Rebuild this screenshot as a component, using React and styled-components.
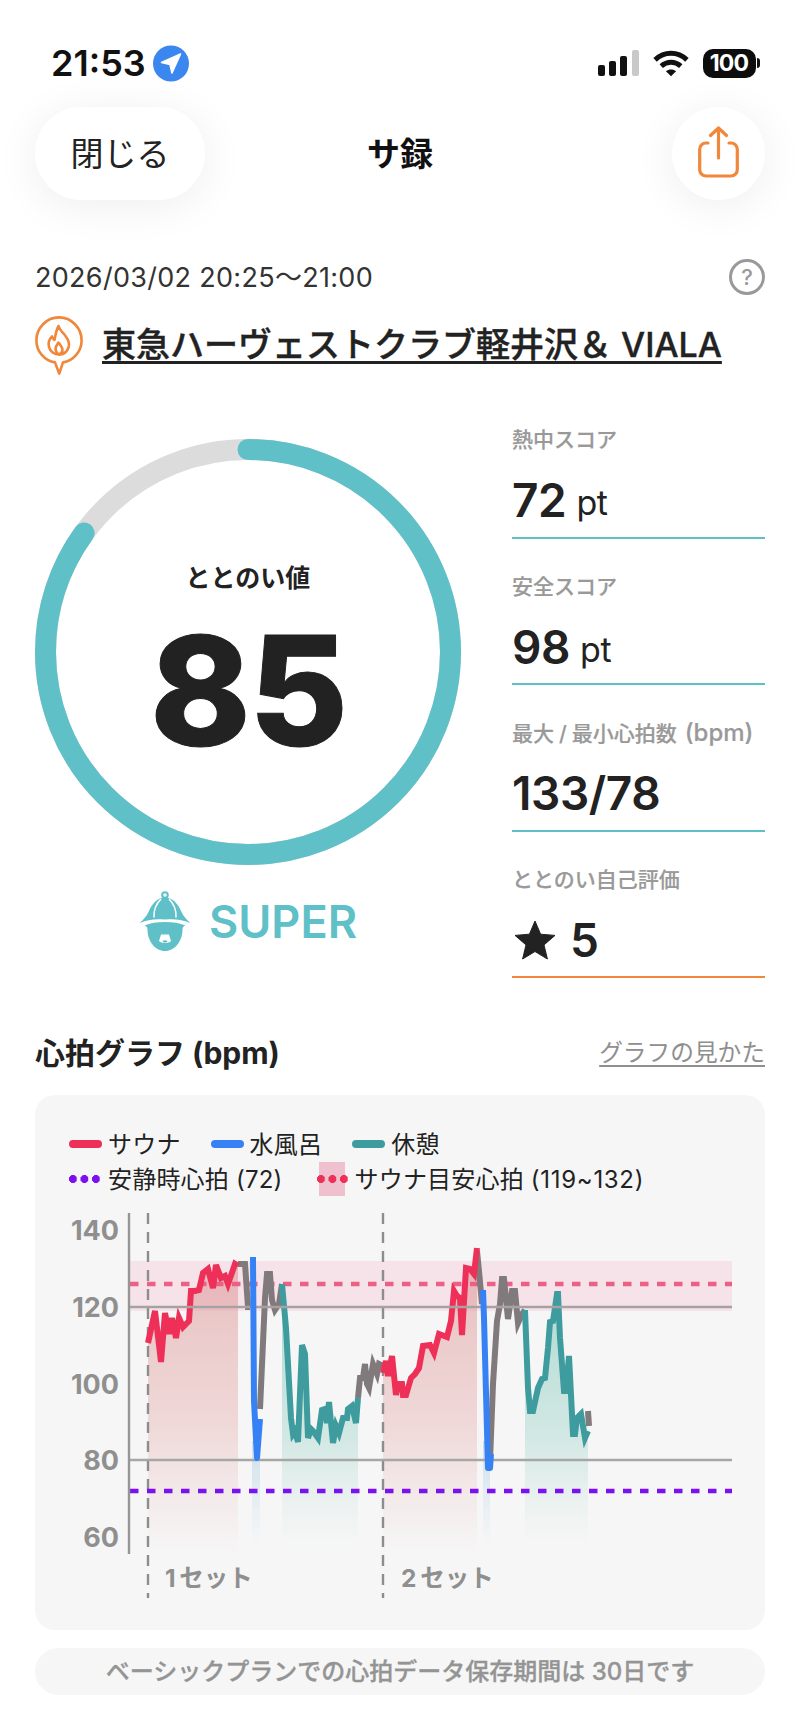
import styled, { createGlobalStyle } from "styled-components";

const TEAL = "#5fc0c7";
const ORANGE = "#f0873a";

const GlobalStyle = createGlobalStyle`
  html, body {
    margin: 0;
    padding: 0;
    background: #ffffff;
  }
  * {
    box-sizing: border-box;
  }
  body {
    font-family: "Inter", "Noto Sans CJK JP", sans-serif;
    color: #222222;
  }
`;

// page coordinates, read off the reference
const red1 = "148,1342 155,1310 161,1361 165,1312 169,1333 172,1317 176,1337 179,1317 183,1326 189,1320 191,1290 195,1290 199,1289 203,1272 208,1268 213,1287 216,1264 221,1277 225,1275 228,1283 235,1263 238,1265";
const gray1 = "238,1263 245,1263 248,1306 250,1306";
const blue1 = "253,1256 254,1400 257,1457 260,1418";
const gray2 = "260,1408 265,1297 267,1273 270,1273 272,1299 275,1309 279,1303 282,1283";
const teal1 = "282,1283 286,1327 291,1417 293,1433 295,1430 298,1441 302,1344 305,1353 308,1437 311,1428 313,1430 318,1437 322,1409 325,1408 327,1422 329,1401 333,1442 336,1425 339,1432 343,1417 347,1417 348,1408 352,1405 356,1422 358,1397";
const gray3 = "358,1397 360,1377 363,1377 365,1363 367,1383 369,1387 373,1363 377,1373 379,1363 383,1365";
const red2 = "383,1372 386,1360 388,1375 392,1355 396,1394 398,1383 402,1383 403,1394 406,1394 411,1377 415,1373 419,1367 423,1345 430,1344 434,1352 439,1333 447,1336 451,1320 454,1290 457,1295 460,1297 462,1334 466,1267 470,1268 474,1273 477,1247";
const gray4 = "477,1250 479,1270 482,1303";
const blue2 = "483,1289 484,1317 488,1467 490,1467 491,1453";
const gray5 = "490,1460 493,1383 497,1320 500,1303 502,1278 504,1278 508,1318 512,1290 515,1290 518,1322 522,1313 525,1309";
const teal2 = "525,1309 528,1387 530,1410 533,1410 538,1387 542,1378 545,1377 548,1347 550,1321 553,1320 557,1293 558,1293 560,1337 564,1390 566,1390 569,1355 573,1433 575,1433 577,1417 581,1413 585,1437 588,1430";
const gray6 = "588,1410 589,1425";

function areaUnder(points, bottom) {
  const list = points.split(" ");
  const first = list[0].split(",")[0];
  const last = list[list.length - 1].split(",")[0];
  return `${first},${bottom} ${points} ${last},${bottom}`;
}

function StatusIcons() {
  return (
    <StatusRight>
      <svg width="41" height="26" viewBox="0 0 41 26">
        <rect x="0" y="15" width="7" height="11" rx="2" fill="#111" />
        <rect x="11" y="11" width="7" height="15" rx="2" fill="#111" />
        <rect x="22" y="6" width="7" height="20" rx="2" fill="#111" />
        <rect x="34" y="0" width="7" height="26" rx="2" fill="#c9c9c9" />
      </svg>
      <svg width="36" height="27" viewBox="0 0 35 26" fill="none" stroke="#111" strokeWidth="4.8">
        <path d="M2 9.5C11 1 24 1 33 9.5" />
        <path d="M8 15.5C13.5 10.5 21.5 10.5 27 15.5" />
        <path d="M17.5 25.5L12.6 20.6C15.3 18.2 19.7 18.2 22.4 20.6Z" fill="#111" stroke="none" />
      </svg>
      <Battery>
        <BatteryBody>100</BatteryBody>
        <BatteryNub />
      </Battery>
    </StatusRight>
  );
}

function VenueIcon() {
  return (
    <svg width="48" height="59" viewBox="0 0 48 59" fill="none" stroke={ORANGE} strokeWidth="2.6" strokeLinejoin="round" strokeLinecap="round">
      <path d="M20 46.4C9.5 44.6 1.4 35.4 1.4 24.4C1.4 12 11.5 1.4 24 1.4C36.5 1.4 46.6 12 46.6 24.4C46.6 35.4 38.5 44.6 28 46.4L24.2 57.6Z" />
      <path d="M23.5 10C25 15 28 16.5 30.5 20C33.5 24 35 27.5 33.5 31.5C32 36 28 38.5 24 38.5C19.5 38.5 15 35.5 14 31C13 27 14.5 23 17 20.5C17.5 22.5 18.5 23.5 19.5 24C20.5 19 21 14.5 23.5 10Z" />
      <path d="M24 38.5C21 36.5 20 33.5 21 30.5L23.5 26.5C25.5 29 27.5 31.5 27.5 34C27.5 36 26 37.5 24 38.5Z" />
    </svg>
  );
}

function Mascot() {
  return (
    <svg width="52" height="60" viewBox="0 0 52 60">
      <circle cx="26" cy="4" r="2.8" fill="none" stroke={TEAL} strokeWidth="2" />
      <path d="M26 6.5C34 6.5 39 13 42.5 21C44.5 25.5 48 29 51.5 32C44 28.5 35 27.5 26 28.5C17 27.5 8 28.5 0.5 32C4 29 7.5 25.5 9.5 21C13 13 18 6.5 26 6.5Z" fill={TEAL} />
      <path d="M22 8C17 13 14.5 20 15 26.5M30 8C35 13 37.5 20 37 26.5" fill="none" stroke="#fff" strokeWidth="1.5" />
      <path d="M8.5 38.5C8.5 36.5 7.5 35 5.5 34.5C11 32 18 31 26 31C34 31 41 32 46.5 34.5C44.5 35 43.5 36.5 43.5 38.5C43.5 50 36 60 26 60C16 60 8.5 50 8.5 38.5Z" fill={TEAL} />
      <path d="M22 43.5H30L32 50C30.5 51.5 28.5 52 26 52C23.5 52 21.5 51.5 20 50Z" fill="#fff" />
      <path d="M23.5 50C25 49 27 49 28.5 50L27.5 51.5H24.5Z" fill={TEAL} />
    </svg>
  );
}

function HeartChart() {
  return (
    <ChartSvg width="730" height="424" viewBox="35 1205 730 424">
      <defs>
        <linearGradient id="redFade" gradientUnits="userSpaceOnUse" x1="0" y1="1270" x2="0" y2="1553">
          <stop offset="0" stopColor="#d98a8a" stopOpacity="0.5" />
          <stop offset="0.55" stopColor="#e29a9a" stopOpacity="0.32" />
          <stop offset="1" stopColor="#e8a8a8" stopOpacity="0" />
        </linearGradient>
        <linearGradient id="tealFade" gradientUnits="userSpaceOnUse" x1="0" y1="1300" x2="0" y2="1545">
          <stop offset="0" stopColor="#5fb8a8" stopOpacity="0.45" />
          <stop offset="0.55" stopColor="#7cc6b8" stopOpacity="0.3" />
          <stop offset="1" stopColor="#a8d8ce" stopOpacity="0" />
        </linearGradient>
        <linearGradient id="blueFade" gradientUnits="userSpaceOnUse" x1="0" y1="1440" x2="0" y2="1545">
          <stop offset="0" stopColor="#9cc8e6" stopOpacity="0.5" />
          <stop offset="1" stopColor="#b8d8ee" stopOpacity="0" />
        </linearGradient>
      </defs>

      <rect x="130" y="1260" width="602" height="50" fill="#f6e3e9" />

      <polygon points={areaUnder(red1, 1553)} fill="url(#redFade)" />
      <polygon points={areaUnder(red2, 1553)} fill="url(#redFade)" />
      <rect x="252" y="1440" width="8" height="103" fill="url(#blueFade)" />
      <rect x="483" y="1440" width="7" height="103" fill="url(#blueFade)" />
      <polygon points={areaUnder(teal1, 1543)} fill="url(#tealFade)" />
      <polygon points={areaUnder(teal2, 1543)} fill="url(#tealFade)" />

      <line x1="148" y1="1212" x2="148" y2="1597" stroke="#8d8d8d" strokeWidth="2.4" strokeDasharray="11 8" />
      <line x1="383" y1="1212" x2="383" y2="1597" stroke="#8d8d8d" strokeWidth="2.4" strokeDasharray="11 8" />
      <line x1="130" y1="1283" x2="732" y2="1283" stroke="#ec5f86" strokeWidth="4.5" strokeDasharray="8.5 8.5" />

      <g fill="none" strokeWidth="6" strokeLinejoin="miter">
        <polyline points={gray1} stroke="#807a7c" />
        <polyline points={gray2} stroke="#807a7c" />
        <polyline points={gray3} stroke="#807a7c" />
        <polyline points={gray4} stroke="#807a7c" />
        <polyline points={gray5} stroke="#807a7c" />
        <polyline points={gray6} stroke="#807a7c" />
        <polyline points={teal1} stroke="#3e9c9f" />
        <polyline points={teal2} stroke="#3e9c9f" />
        <polyline points={red1} stroke="#ee3058" />
        <polyline points={red2} stroke="#ee3058" />
      </g>

      <line x1="130" y1="1306" x2="732" y2="1306" stroke="#a6a2a4" strokeWidth="2.4" />
      <line x1="130" y1="1459" x2="732" y2="1459" stroke="#a6a6a6" strokeWidth="2.4" />

      <g fill="none" strokeWidth="6" strokeLinejoin="round">
        <polyline points={blue1} stroke="#3682f4" />
        <polyline points={blue2} stroke="#3682f4" />
      </g>

      <line x1="130" y1="1490" x2="732" y2="1490" stroke="#7c10f0" strokeWidth="4.5" strokeDasharray="8.5 8.5" />
      <line x1="129" y1="1212" x2="129" y2="1553" stroke="#969696" strokeWidth="2.4" />

      <AxisLabel x="119" y="1239">140</AxisLabel>
      <AxisLabel x="119" y="1316">120</AxisLabel>
      <AxisLabel x="119" y="1393">100</AxisLabel>
      <AxisLabel x="119" y="1469">80</AxisLabel>
      <AxisLabel x="119" y="1546">60</AxisLabel>
      <SetLabel x="165" y="1586">1 セット</SetLabel>
      <SetLabel x="401" y="1586">2 セット</SetLabel>
    </ChartSvg>
  );
}

export default function App() {
  return (
    <Page>
      <GlobalStyle />
      <StatusBar>
        <StatusLeft>
          <Clock>21:53</Clock>
          <svg width="36" height="37" viewBox="0 0 36 37">
            <circle cx="18" cy="18.5" r="18" fill="#3b87f0" />
            <path d="M27.5 9L8.5 17.5L17 19.5L19 28Z" fill="#fff" stroke="#fff" strokeWidth="1.6" strokeLinejoin="round" />
          </svg>
        </StatusLeft>
        <StatusIcons />
      </StatusBar>

      <TopBar>
        <CloseButton>閉じる</CloseButton>
        <Title>サ録</Title>
        <ShareButton>
          <svg width="41" height="52" viewBox="0 0 41 52" fill="none" stroke={ORANGE} strokeWidth="3.2" strokeLinecap="round" strokeLinejoin="round">
            <path d="M10 17H8C4.5 17 1.7 19.8 1.7 23.3V43.7C1.7 47.2 4.5 50 8 50H33C36.5 50 39.3 47.2 39.3 43.7V23.3C39.3 19.8 36.5 17 33 17H31" />
            <path d="M20.5 32V2M12.5 9.5L20.5 2L28.5 9.5" />
          </svg>
        </ShareButton>
      </TopBar>

      <Content>
        <DateRow>
          <DateText>2026/03/02 20:25～21:00</DateText>
          <HelpMark>?</HelpMark>
        </DateRow>

        <VenueRow>
          <VenueIcon />
          <VenueName>東急ハーヴェストクラブ軽井沢＆ VIALA</VenueName>
        </VenueRow>

        <ScoreGrid>
          <ScoreLeft>
            <Ring>
              <svg width="426" height="426" viewBox="0 0 426 426" fill="none">
                <circle cx="213" cy="213" r="202.5" stroke="#dcdcdc" strokeWidth="21" />
                <circle
                  cx="213"
                  cy="213"
                  r="202.5"
                  stroke={TEAL}
                  strokeWidth="21"
                  strokeLinecap="round"
                  pathLength="100"
                  strokeDasharray="85 100"
                  transform="rotate(-90 213 213)"
                />
              </svg>
              <RingText>
                <RingLabel>ととのい値</RingLabel>
                <RingValue>85</RingValue>
              </RingText>
            </Ring>
            <RankRow>
              <Mascot />
              <RankText>SUPER</RankText>
            </RankRow>
          </ScoreLeft>

          <StatList>
            <StatItem>
              <StatLabel>熱中スコア</StatLabel>
              <StatValue>72<StatUnit>pt</StatUnit></StatValue>
            </StatItem>
            <StatItem>
              <StatLabel>安全スコア</StatLabel>
              <StatValue>98<StatUnit>pt</StatUnit></StatValue>
            </StatItem>
            <StatItem>
              <StatLabel>最大<LabelSlash>/</LabelSlash>最小心拍数<LabelLatin>(bpm)</LabelLatin></StatLabel>
              <StatValue>133/78</StatValue>
            </StatItem>
            <StatItem $accent={ORANGE}>
              <StatLabel>ととのい自己評価</StatLabel>
              <StatValue>
                <StarIcon width="42" height="40" viewBox="0 0 42 40">
                  <path d="M21 1L26.6 14.2L41 15.4L30 24.9L33.4 39L21 31.5L8.6 39L12 24.9L1 15.4L15.4 14.2Z" fill="#222" stroke="#222" strokeLinejoin="round" />
                </StarIcon>
                <StarScore>5</StarScore>
              </StatValue>
            </StatItem>
          </StatList>
        </ScoreGrid>

        <GraphHead>
          <GraphTitle>心拍グラフ (bpm)</GraphTitle>
          <GraphLink>グラフの見かた</GraphLink>
        </GraphHead>

        <GraphCard>
          <Legend>
            <LegendRow>
              <LegendItem>
                <LineSwatch $color="#ee3058" />
                <span>サウナ</span>
              </LegendItem>
              <LegendItem>
                <LineSwatch $color="#3682f4" />
                <span>水風呂</span>
              </LegendItem>
              <LegendItem>
                <LineSwatch $color="#3e9c9f" />
                <span>休憩</span>
              </LegendItem>
            </LegendRow>
            <LegendRow>
              <LegendItem>
                <DotSwatch $color="#7c10f0" />
                <span>安静時心拍 (72)</span>
              </LegendItem>
              <LegendItem>
                <BandSwatch>
                  <DotSwatch $color="#ee3058" />
                </BandSwatch>
                <span>サウナ目安心拍 <LegendRange>(119~132)</LegendRange></span>
              </LegendItem>
            </LegendRow>
          </Legend>
          <HeartChart />
        </GraphCard>

        <NoticePill>ベーシックプランでの心拍データ保存期間は 30日です</NoticePill>
      </Content>
    </Page>
  );
}

const Page = styled.div`
  width: 800px;
  height: 1732px;
  overflow: hidden;
  background: #ffffff;
`;

const StatusBar = styled.div`
  height: 107px;
  padding: 19px 40px 0 51px;
  display: flex;
  align-items: center;
  justify-content: space-between;
`;

const StatusLeft = styled.div`
  display: flex;
  align-items: center;
  gap: 7px;
`;

const Clock = styled.span`
  font-size: 36px;
  font-weight: 600;
  color: #111111;
`;

const StatusRight = styled.div`
  display: flex;
  align-items: center;
  gap: 14px;
`;

const Battery = styled.div`
  display: flex;
  align-items: center;
  gap: 1.5px;
`;

const BatteryBody = styled.div`
  width: 53px;
  height: 29px;
  border-radius: 10px;
  background: #0d0d0d;
  color: #ffffff;
  font-size: 23px;
  font-weight: 700;
  letter-spacing: -0.8px;
  line-height: 29px;
  text-align: center;
`;

const BatteryNub = styled.div`
  width: 3px;
  height: 10px;
  border-radius: 0 3px 3px 0;
  background: #111111;
`;

const TopBar = styled.div`
  height: 93px;
  padding: 0 35px 0 35px;
  display: grid;
  grid-template-columns: 1fr auto 1fr;
  align-items: center;
`;

const CloseButton = styled.div`
  width: 170px;
  height: 93px;
  padding-bottom: 4px;
  border-radius: 46px;
  background: #ffffff;
  box-shadow: 0 6px 44px rgba(0, 0, 0, 0.07);
  display: flex;
  align-items: center;
  justify-content: center;
  font-size: 33px;
  color: #222222;
`;

const Title = styled.div`
  padding-bottom: 4px;
  font-size: 33px;
  font-weight: 700;
  color: #111111;
`;

const ShareButton = styled.div`
  justify-self: end;
  width: 93px;
  height: 93px;
  border-radius: 50%;
  background: #ffffff;
  box-shadow: 0 6px 44px rgba(0, 0, 0, 0.07);
  display: flex;
  align-items: center;
  justify-content: center;
  padding-bottom: 4px;
`;

const Content = styled.div`
  padding: 60px 35px 0;
`;

const DateRow = styled.div`
  height: 36px;
  display: flex;
  align-items: center;
  justify-content: space-between;
`;

const DateText = styled.span`
  margin-bottom: 6px;
  font-size: 27px;
  letter-spacing: 0.3px;
  color: #333333;
`;

const HelpMark = styled.span`
  width: 36px;
  height: 36px;
  margin-top: -2px;
  border-radius: 50%;
  border: 3px solid #999999;
  display: flex;
  align-items: center;
  justify-content: center;
  font-size: 22px;
  font-weight: 500;
  color: #999999;
`;

const VenueRow = styled.div`
  margin-top: 20px;
  height: 59px;
  display: flex;
  align-items: center;
  gap: 19px;
`;

const VenueName = styled.span`
  margin-bottom: 6px;
  font-size: 34px;
  font-weight: 500;
  -webkit-text-stroke: 0.4px #222222;
  white-space: nowrap;
  color: #222222;
  text-decoration: underline;
  text-decoration-thickness: 3px;
  text-underline-offset: 4px;
`;

const ScoreGrid = styled.div`
  margin-top: 50px;
  display: flex;
  gap: 51px;
`;

const ScoreLeft = styled.div`
  width: 426px;
  padding-top: 14px;
`;

const Ring = styled.div`
  position: relative;
  width: 426px;
  height: 426px;
  svg {
    display: block;
  }
`;

const RingText = styled.div`
  position: absolute;
  inset: 0;
  padding-top: 124px;
  display: flex;
  flex-direction: column;
  align-items: center;
`;

const RingLabel = styled.div`
  font-size: 25px;
  font-weight: 700;
  line-height: 30px;
  color: #222222;
`;

const RingValue = styled.div`
  margin-top: 23px;
  font-size: 152px;
  font-weight: 800;
  line-height: 150px;
  letter-spacing: -2px;
  -webkit-text-stroke: 1px #222222;
  color: #222222;
`;

const RankRow = styled.div`
  margin-top: 26px;
  display: flex;
  align-items: center;
  justify-content: center;
  gap: 18px;
`;

const RankText = styled.span`
  font-size: 45px;
  font-weight: 600;
  color: ${TEAL};
`;

const StatList = styled.div`
  width: 253px;
  margin-top: 1px;
  display: flex;
  flex-direction: column;
  gap: 34px;
`;

const StatItem = styled.div`
  height: 112.5px;
  border-bottom: 2px solid ${(p) => p.$accent || TEAL};
`;

const StatLabel = styled.div`
  height: 28px;
  font-size: 21px;
  font-weight: 500;
  -webkit-text-stroke: 0.2px #999999;
  line-height: 28px;
  white-space: nowrap;
  color: #999999;
`;

const LabelSlash = styled.span`
  margin: 0 5px;
`;

const LabelLatin = styled.span`
  margin-left: 8px;
  font-size: 24px;
`;

const StatValue = styled.div`
  margin-top: 18px;
  height: 56px;
  display: flex;
  align-items: center;
  font-size: 46px;
  font-weight: 600;
  letter-spacing: -0.4px;
  line-height: 56px;
  color: #222222;
`;

const StatUnit = styled.span`
  margin-left: 10px;
  margin-top: 6px;
  font-size: 34px;
  font-weight: 400;
`;

const StarIcon = styled.svg`
  margin-left: 2px;
`;

const StarScore = styled.span`
  margin-left: 14px;
`;

const GraphHead = styled.div`
  margin-top: 56px;
  height: 40px;
  display: flex;
  align-items: center;
  justify-content: space-between;
`;

const GraphTitle = styled.span`
  margin-bottom: 6px;
  font-size: 30px;
  font-weight: 700;
  color: #222222;
`;

const GraphLink = styled.span`
  margin-bottom: 6px;
  font-size: 23.7px;
  color: #8f8f8f;
  text-decoration: underline;
  text-underline-offset: 4px;
`;

const GraphCard = styled.div`
  margin-top: 21px;
  height: 535px;
  border-radius: 20px;
  background: #f6f6f6;
  overflow: hidden;
`;

const Legend = styled.div`
  padding: 31.5px 0 0 34px;
`;

const LegendRow = styled.div`
  height: 35px;
  display: flex;
  align-items: center;
  gap: 30px;
`;

const LegendItem = styled.div`
  display: flex;
  align-items: center;
  gap: 6px;
  font-size: 24px;
  letter-spacing: 0.2px;
  color: #222222;
  white-space: nowrap;
  span {
    margin-bottom: 3px;
  }
`;

const LegendRange = styled.b`
  font-weight: 400;
  letter-spacing: 0.7px;
`;

const LineSwatch = styled.i`
  display: block;
  width: 33px;
  height: 8px;
  border-radius: 4px;
  background: ${(p) => p.$color};
`;

const DotSwatch = styled.i`
  display: block;
  width: 31px;
  height: 8px;
  margin-right: 2px;
  background: radial-gradient(circle at 4px 4px, ${(p) => p.$color} 3.8px, transparent 4.2px) 0 0 / 11.5px 8px repeat-x;
`;

const BandSwatch = styled.div`
  width: 26px;
  height: 34px;
  margin: 0 3px 0 7px;
  background: #efc1cf;
  display: flex;
  align-items: center;
  justify-content: center;
  i {
    flex: none;
    margin-right: 0;
  }
`;

const ChartSvg = styled.svg`
  display: block;
  margin-top: 9.5px;
`;

const AxisLabel = styled.text`
  font-size: 27px;
  font-weight: 700;
  fill: #8f8f8f;
  text-anchor: end;
`;

const SetLabel = styled.text`
  font-size: 24.5px;
  font-weight: 700;
  word-spacing: -2px;
  fill: #8f8f8f;
`;

const NoticePill = styled.div`
  margin-top: 18px;
  height: 47px;
  padding-bottom: 5px;
  border-radius: 24px;
  background: #f6f6f6;
  display: flex;
  align-items: center;
  justify-content: center;
  font-size: 24px;
  font-weight: 500;
  -webkit-text-stroke: 0.3px #949494;
  color: #949494;
`;
